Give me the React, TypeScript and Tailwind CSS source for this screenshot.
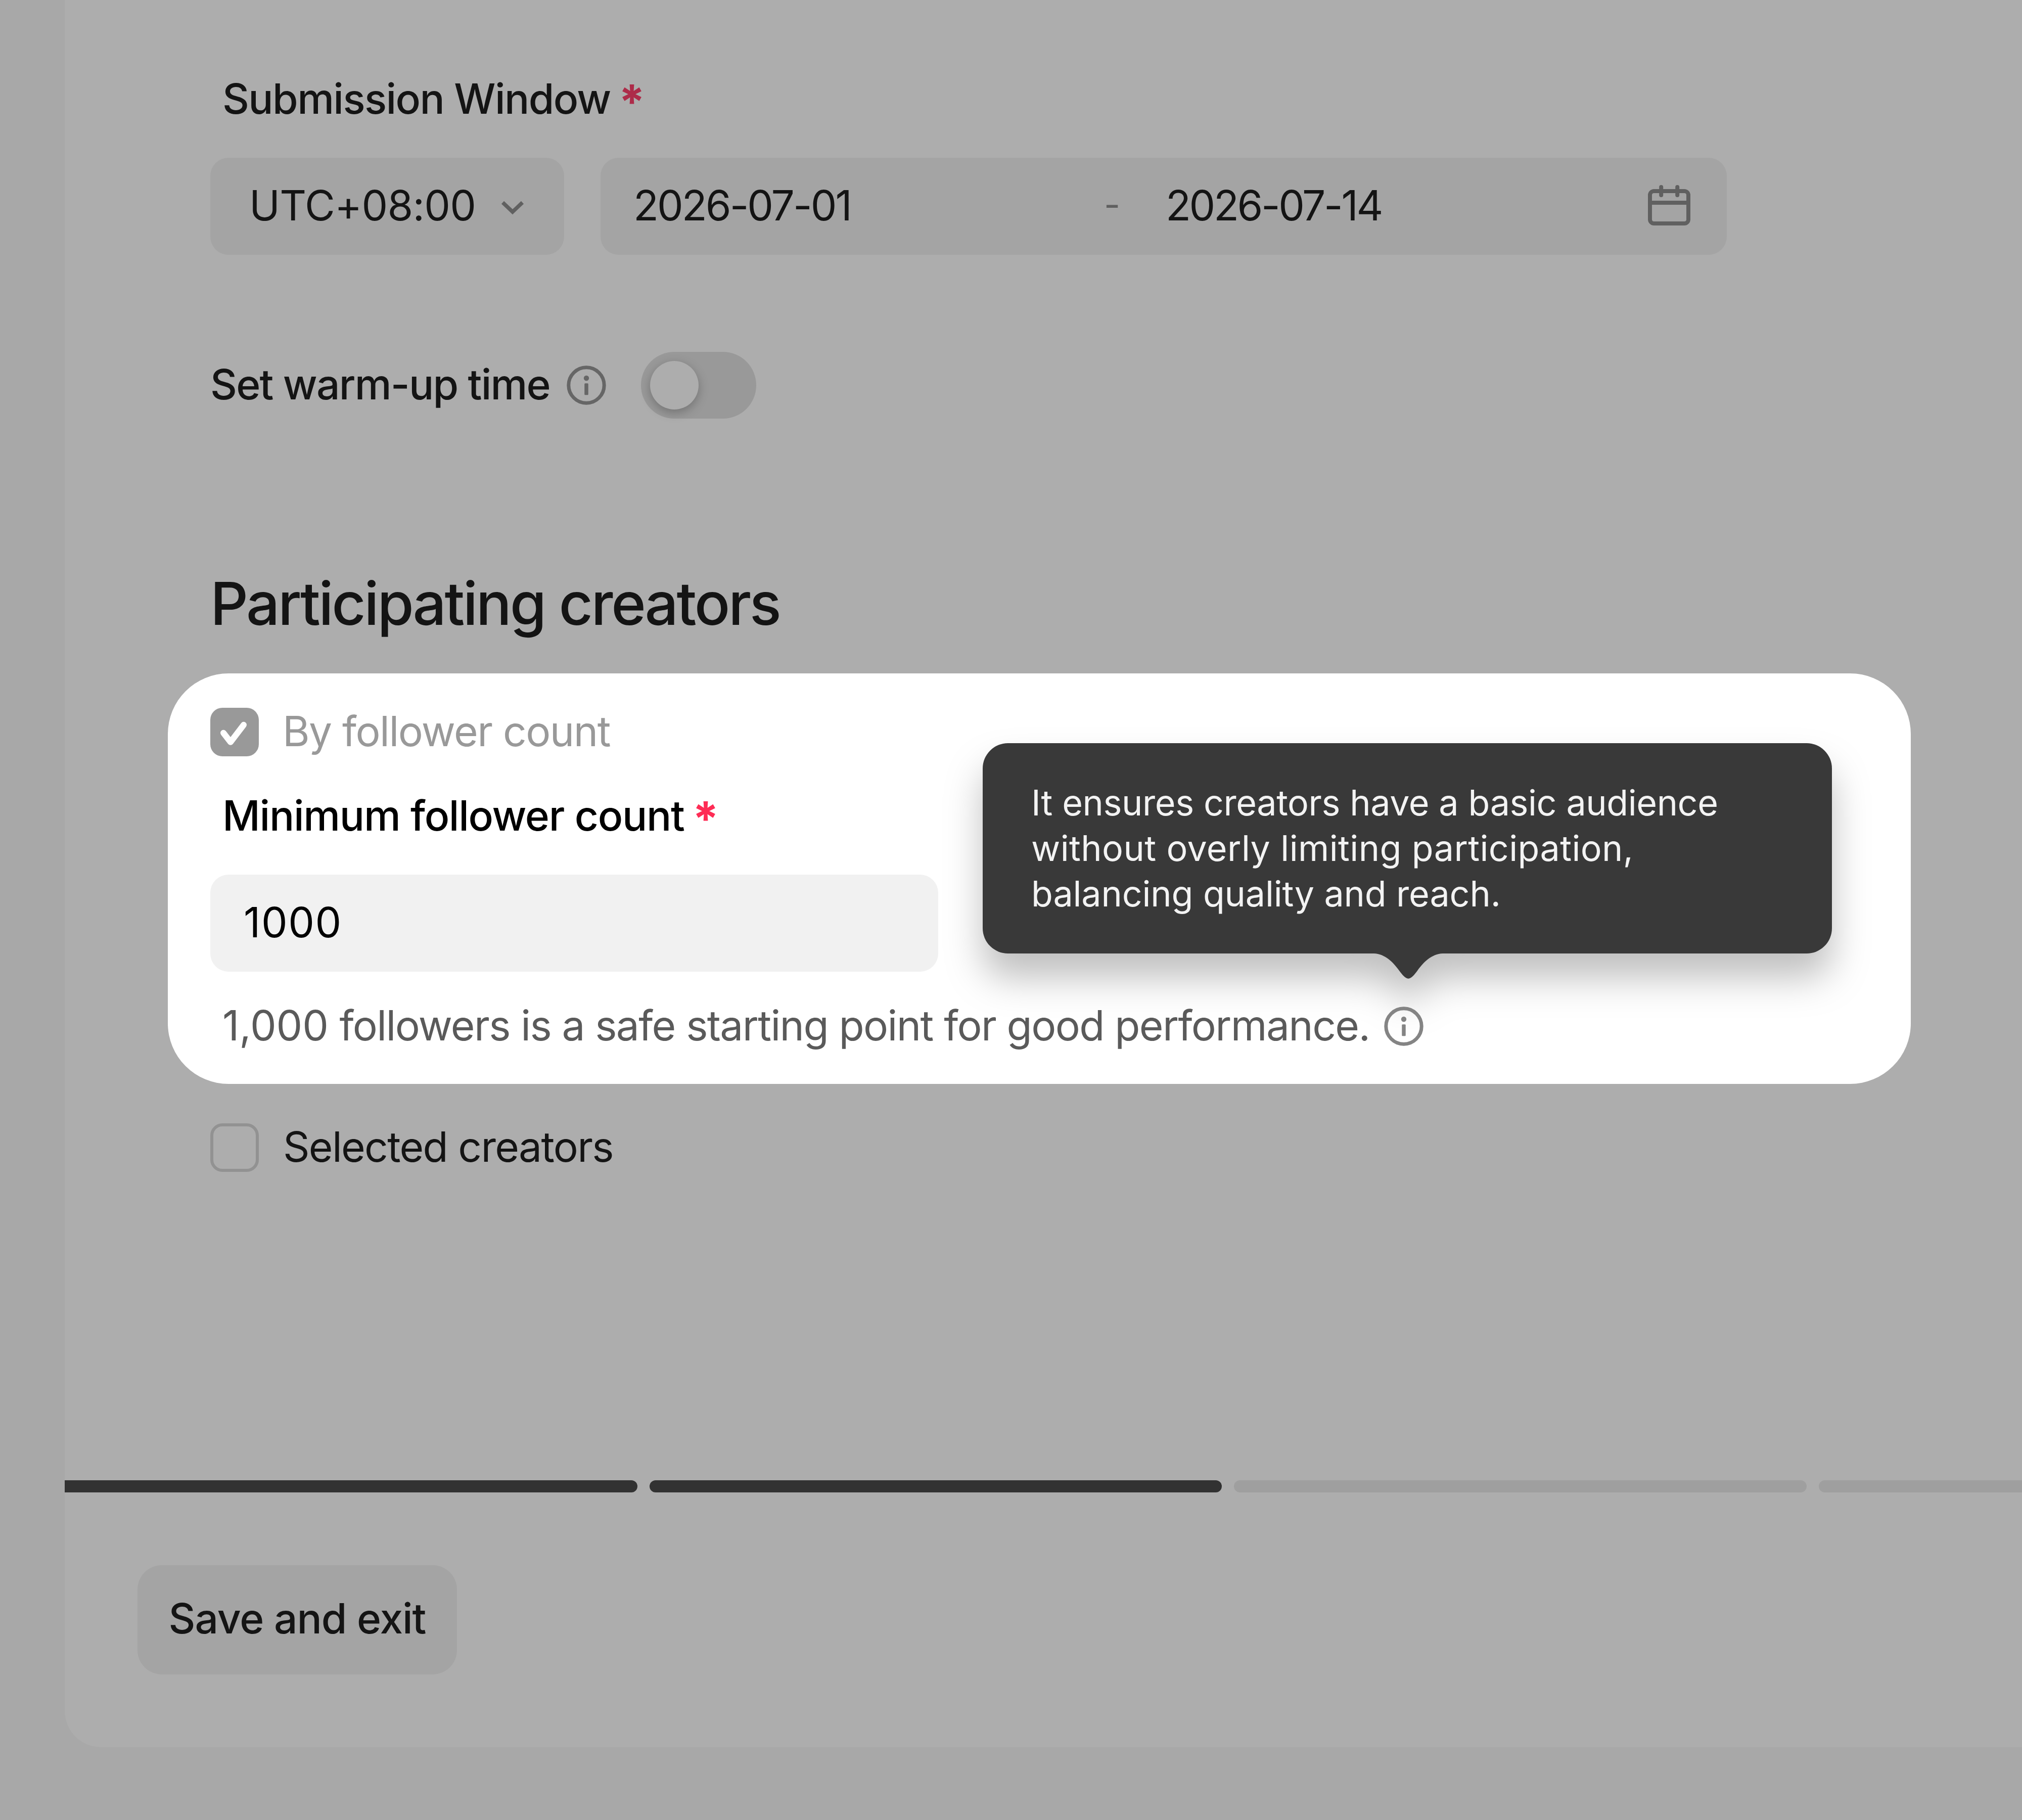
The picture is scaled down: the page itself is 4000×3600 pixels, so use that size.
import React from 'react';

const tooltipLines = [
  { text: 'It ensures creators have a basic audience', className: 'tracking-[-0.42px]' },
  { text: 'without overly limiting participation,', className: 'tracking-[0.38px]' },
  { text: 'balancing quality and reach.', className: 'tracking-[-0.15px]' },
];

const InfoIcon: React.FC<{ className?: string }> = ({ className }) => (
  <svg viewBox="0 0 96 96" className={`h-24 w-24 shrink-0 ${className ?? ''}`} fill="currentColor">
    <circle cx="48" cy="48" r="35.2" fill="none" stroke="currentColor" strokeWidth="7" />
    <circle cx="48" cy="34" r="5.2" />
    <rect x="44.25" y="44.3" width="7.5" height="23" rx="1.5" />
  </svg>
);

const CalendarIcon: React.FC = () => (
  <svg viewBox="0 0 84 84" className="h-[84px] w-[84px]" fill="none" stroke="#606060" strokeWidth="8">
    <rect x="4" y="12" width="76" height="64" rx="8" />
    <path d="M4 35h76" />
    <path d="M26.2 4v16M58.2 4v16" strokeLinecap="round" />
  </svg>
);

const Required: React.FC<{ className?: string }> = ({ className }) => (
  <span className={`ml-[16px] translate-y-[5px] text-[94px] font-bold ${className ?? ''}`}>*</span>
);

const Tooltip: React.FC = () => (
  <div className="absolute left-[1612px] top-[138px] h-[416px] w-[1680px] drop-shadow-[0_48px_36px_rgba(0,0,0,0.25)]">
    <div className="h-full rounded-[50px] bg-[#393939] pl-24 pt-[73px] text-[70px] leading-[90px] text-[#f3f3f3]">
      {tooltipLines.map((line) => (
        <div key={line.text} className={line.className}>
          {line.text}
        </div>
      ))}
    </div>
    <svg viewBox="0 0 140 52" className="absolute left-[772px] top-[415px] h-[52px] w-[140px]">
      <path
        d="M0 0V1H2C24 2 40 18 52 35C58 43 64 50.7 70 50.7C76 50.7 82 43 88 35C100 18 116 2 138 1H140V0Z"
        fill="#393939"
      />
    </svg>
  </div>
);

const App: React.FC = () => {
  return (
    <div className="h-[3600px] w-[4000px] overflow-hidden bg-[#a8a8a8] pl-32 font-['Inter','Noto_Sans',sans-serif] text-[82px] leading-[100px] text-[#141414]">
      <div className="flex h-[3456px] flex-col overflow-hidden rounded-bl-[72px] bg-[#adadad]">
        <div className="flex flex-col pl-[288px] pt-[146px]">
          {/* Submission window */}
          <div className="ml-6 flex h-[100px] font-medium">
            <span className="tracking-[-1.62px]">Submission Window</span>
            <Required className="text-[#ad2b49]" />
          </div>
          <div className="mt-[66px] flex gap-[72px]">
            <div className="flex h-48 w-[700px] items-center justify-between rounded-[36px] bg-[#a4a4a4] pl-[77px] pr-[78px]">
              <span className="pb-[3px] tracking-[-0.77px]">UTC+08:00</span>
              <svg viewBox="0 0 48 48" className="h-12 w-12" fill="none" stroke="#606060" strokeWidth="7.5">
                <path d="M4.5 16.5L24 35L43.5 16.5" />
              </svg>
            </div>
            <div className="flex h-48 w-[2228px] items-center rounded-[36px] bg-[#a4a4a4] pl-[65px] pr-[72px]">
              <span className="w-[931px] pb-[3px] tracking-[-2.99px]">2026-07-01</span>
              <span className="w-[122px] pb-[7px] text-[70px] text-[#606060]">-</span>
              <span className="pb-[3px] tracking-[-3.39px]">2026-07-14</span>
              <div className="ml-auto">
                <CalendarIcon />
              </div>
            </div>
          </div>

          {/* Warm-up */}
          <div className="mt-48 flex h-[132px] items-center">
            <span className="pb-[3px] font-medium tracking-[-1.77px]">Set warm-up time</span>
            <InfoIcon className="ml-6 text-[#666666]" />
            <div className="ml-[60px] flex h-[132px] w-[228px] items-center rounded-full bg-[#999999] px-[18px]">
              <div className="h-24 w-24 rounded-full bg-[#adadad] shadow-[0_6px_20px_rgba(0,0,0,0.26)]" />
            </div>
          </div>

          <h1 className="mt-[294px] text-[117px] font-medium leading-[144px] tracking-[-3.45px]">
            Participating creators
          </h1>

          {/* Highlighted step */}
          <div className="relative -ml-[84px] mt-[66px] h-[812px] w-[3448px] rounded-[120px] bg-white pl-[84px] pt-[68px]">
            <div className="flex h-24 items-center">
              <div className="h-24 w-24 rounded-3xl bg-[#999999]">
                <svg
                  viewBox="0 0 96 96"
                  fill="none"
                  stroke="white"
                  strokeWidth="12"
                  strokeLinecap="round"
                  strokeLinejoin="round"
                >
                  <path d="M26 49.8L40 67.8L66 33.8" />
                </svg>
              </div>
              <span className="ml-[47px] pb-[3px] tracking-[-1.56px] text-[#999999]">By follower count</span>
            </div>
            <div className="ml-6 mt-[68px] flex h-[100px] font-medium text-black">
              <span className="tracking-[-1.29px]">Minimum follower count</span>
              <Required className="text-[#fe2c55]" />
            </div>
            <div className="mt-[66px] flex h-48 w-[1440px] items-center rounded-[36px] bg-[#f1f1f1] pl-[66px]">
              <span className="pb-[3px] tracking-[1.6px] text-black">1000</span>
            </div>
            <Tooltip />
            <div className="relative ml-6 mt-[58px] flex h-[100px] items-center">
              <span className="pb-[3px] tracking-[-1.65px] text-[#5a5a5a]">
                <span className="tracking-normal">1,000</span> followers is a safe starting point for good
                performance.
              </span>
              <InfoIcon className="ml-5 text-[#848484]" />
            </div>
          </div>

          <div className="mt-[78px] flex h-24 items-center">
            <div className="h-24 w-24 rounded-3xl border-[6px] border-[#929292]" />
            <span className="ml-12 pb-[3px] tracking-[-1.74px]">Selected creators</span>
          </div>
        </div>

        {/* Footer */}
        <div className="mt-auto">
          <div className="flex w-[4602.67px] gap-6">
            <div className="h-6 w-[1132.67px] rounded-r-xl bg-[#323232]" />
            <div className="h-6 w-[1132.67px] rounded-xl bg-[#323232]" />
            <div className="h-6 w-[1132.67px] rounded-xl bg-[#9f9f9f]" />
            <div className="h-6 w-[1132.67px] rounded-xl bg-[#9f9f9f]" />
          </div>
          <div className="px-36 py-36">
            <button className="flex h-[216px] w-[632px] items-center justify-center rounded-[48px] bg-[#a4a4a4] pb-1 font-medium tracking-[-1.09px]">
              Save and exit
            </button>
          </div>
        </div>
      </div>
    </div>
  );
};

export default App;
